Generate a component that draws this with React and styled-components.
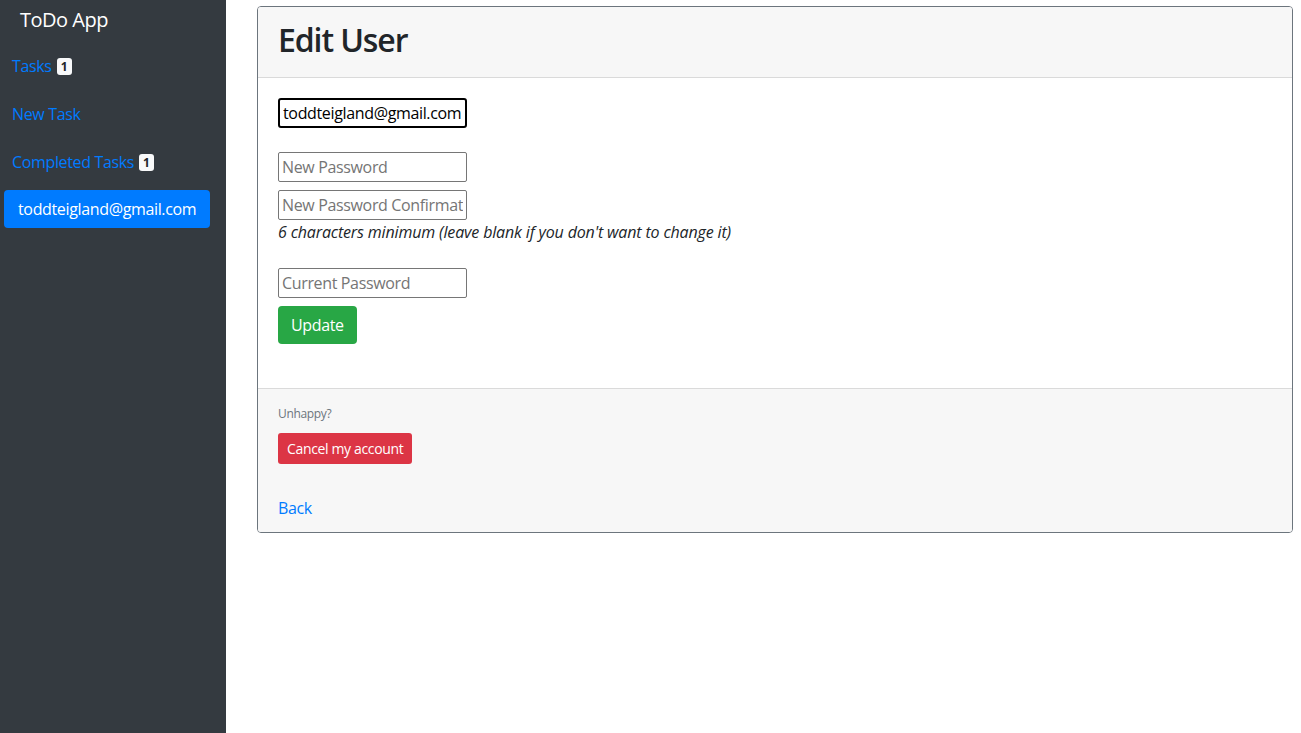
import styled, { createGlobalStyle } from "styled-components";

const GlobalStyle = createGlobalStyle`
  html, body {
    margin: 0;
    padding: 0;
    background: #ffffff;
    font-family: "Segoe UI", "Open Sans", "Noto Sans", sans-serif;
    letter-spacing: -0.35px;
    color: #212529;
  }
  * {
    box-sizing: border-box;
  }
`;

const Layout = styled.div`
  display: flex;
  flex-direction: row;
  min-height: 100vh;
`;

const Sidebar = styled.nav`
  width: 226px;
  flex-shrink: 0;
  background-color: #343a40;
  display: flex;
  flex-direction: column;
  align-items: flex-start;
`;

const Brand = styled.div`
  font-size: 20px;
  line-height: 30px;
  color: #ffffff;
  padding: 5px 20px 7px;
  letter-spacing: -0.5px;
`;

const NavLink = styled.a`
  display: flex;
  align-items: center;
  gap: 5px;
  font-size: 16px;
  line-height: 24px;
  color: #007bff;
  text-decoration: none;
  padding: 12px 12px;
`;

const Badge = styled.span`
  display: inline-block;
  background-color: #f8f9fa;
  color: #212529;
  font-size: 12px;
  font-weight: 700;
  line-height: 1;
  padding: 3px 4px 2px;
  border-radius: 3px;
  letter-spacing: 0;
`;

const ActivePill = styled.a`
  display: inline-block;
  margin: 4px 0 0 4px;
  padding: 7px 14px;
  font-size: 16px;
  line-height: 24px;
  color: #ffffff;
  background-color: #007bff;
  border-radius: 4px;
  text-decoration: none;
`;

const Main = styled.main`
  flex: 1;
  padding: 6px 8px 0 31px;
`;

const Card = styled.div`
  border: 1px solid #6c757d;
  border-radius: 4px;
  overflow: hidden;
`;

const CardHeader = styled.div`
  background-color: #f7f7f7;
  border-bottom: 1px solid #dadada;
  padding: 14px 20px 12px;
`;

const Title = styled.h1`
  margin: 0 0 6px;
  font-size: 32px;
  font-weight: 600;
  line-height: 38px;
  letter-spacing: -1.1px;
  color: #212529;
`;

const CardBody = styled.div`
  background: #ffffff;
  padding: 20px 20px 44px;
`;

const Field = styled.div`
  margin-top: ${(p) => p.$gap || 0}px;
`;

const Input = styled.input`
  display: block;
  width: 189px;
  height: 30px;
  padding: 1px 3px;
  font-family: inherit;
  font-size: 16px;
  letter-spacing: inherit;
  color: #000000;
  border: ${(p) => (p.$focused ? "2px solid #000000" : "1px solid #767676")};
  border-radius: ${(p) => (p.$focused ? "3px" : "2px")};
  background: #ffffff;
  outline: none;
  &::placeholder {
    color: #757575;
  }
`;

const Hint = styled.em`
  display: block;
  font-size: 16px;
  line-height: 24px;
  letter-spacing: -0.15px;
  color: #212529;
`;

const Button = styled.button`
  display: inline-block;
  font-family: inherit;
  letter-spacing: inherit;
  font-size: ${(p) => (p.$small ? "14px" : "16px")};
  line-height: ${(p) => (p.$small ? "21px" : "24px")};
  padding: ${(p) => (p.$small ? "4px 8px" : "6px 12px")};
  border: 1px solid transparent;
  border-radius: ${(p) => (p.$small ? "3px" : "4px")};
  color: #ffffff;
  background-color: ${(p) => p.$color};
  cursor: pointer;
`;

const CardFooter = styled.div`
  background-color: #f7f7f7;
  border-top: 1px solid #dadada;
  padding: 16px 20px 12px;
`;

const Muted = styled.p`
  margin: 0 0 10px;
  font-size: 12px;
  line-height: 18px;
  color: #6c757d;
`;

const BackLink = styled.a`
  display: block;
  margin-top: 32px;
  font-size: 16px;
  line-height: 24px;
  color: #007bff;
  text-decoration: none;
`;

const App = () => {
  return (
    <>
      <GlobalStyle />
      <Layout>
        <Sidebar>
          <Brand>ToDo App</Brand>
          <NavLink href="#">
            Tasks <Badge>1</Badge>
          </NavLink>
          <NavLink href="#">New Task</NavLink>
          <NavLink href="#">
            Completed Tasks <Badge>1</Badge>
          </NavLink>
          <ActivePill href="#">toddteigland@gmail.com</ActivePill>
        </Sidebar>
        <Main>
          <Card>
            <CardHeader>
              <Title>Edit User</Title>
            </CardHeader>
            <CardBody>
              <form onSubmit={(e) => e.preventDefault()}>
                <Field>
                  <Input $focused type="email" defaultValue="toddteigland@gmail.com" />
                </Field>
                <Field $gap={24}>
                  <Input type="password" placeholder="New Password" />
                </Field>
                <Field $gap={8}>
                  <Input type="password" placeholder="New Password Confirmation" />
                  <Hint>6 characters minimum (leave blank if you don't want to change it)</Hint>
                </Field>
                <Field $gap={24}>
                  <Input type="password" placeholder="Current Password" />
                </Field>
                <Field $gap={8}>
                  <Button type="submit" $color="#28a745">Update</Button>
                </Field>
              </form>
            </CardBody>
            <CardFooter>
              <Muted>Unhappy?</Muted>
              <Button $small $color="#dc3545">Cancel my account</Button>
              <BackLink href="#">Back</BackLink>
            </CardFooter>
          </Card>
        </Main>
      </Layout>
    </>
  );
};

export default App;
